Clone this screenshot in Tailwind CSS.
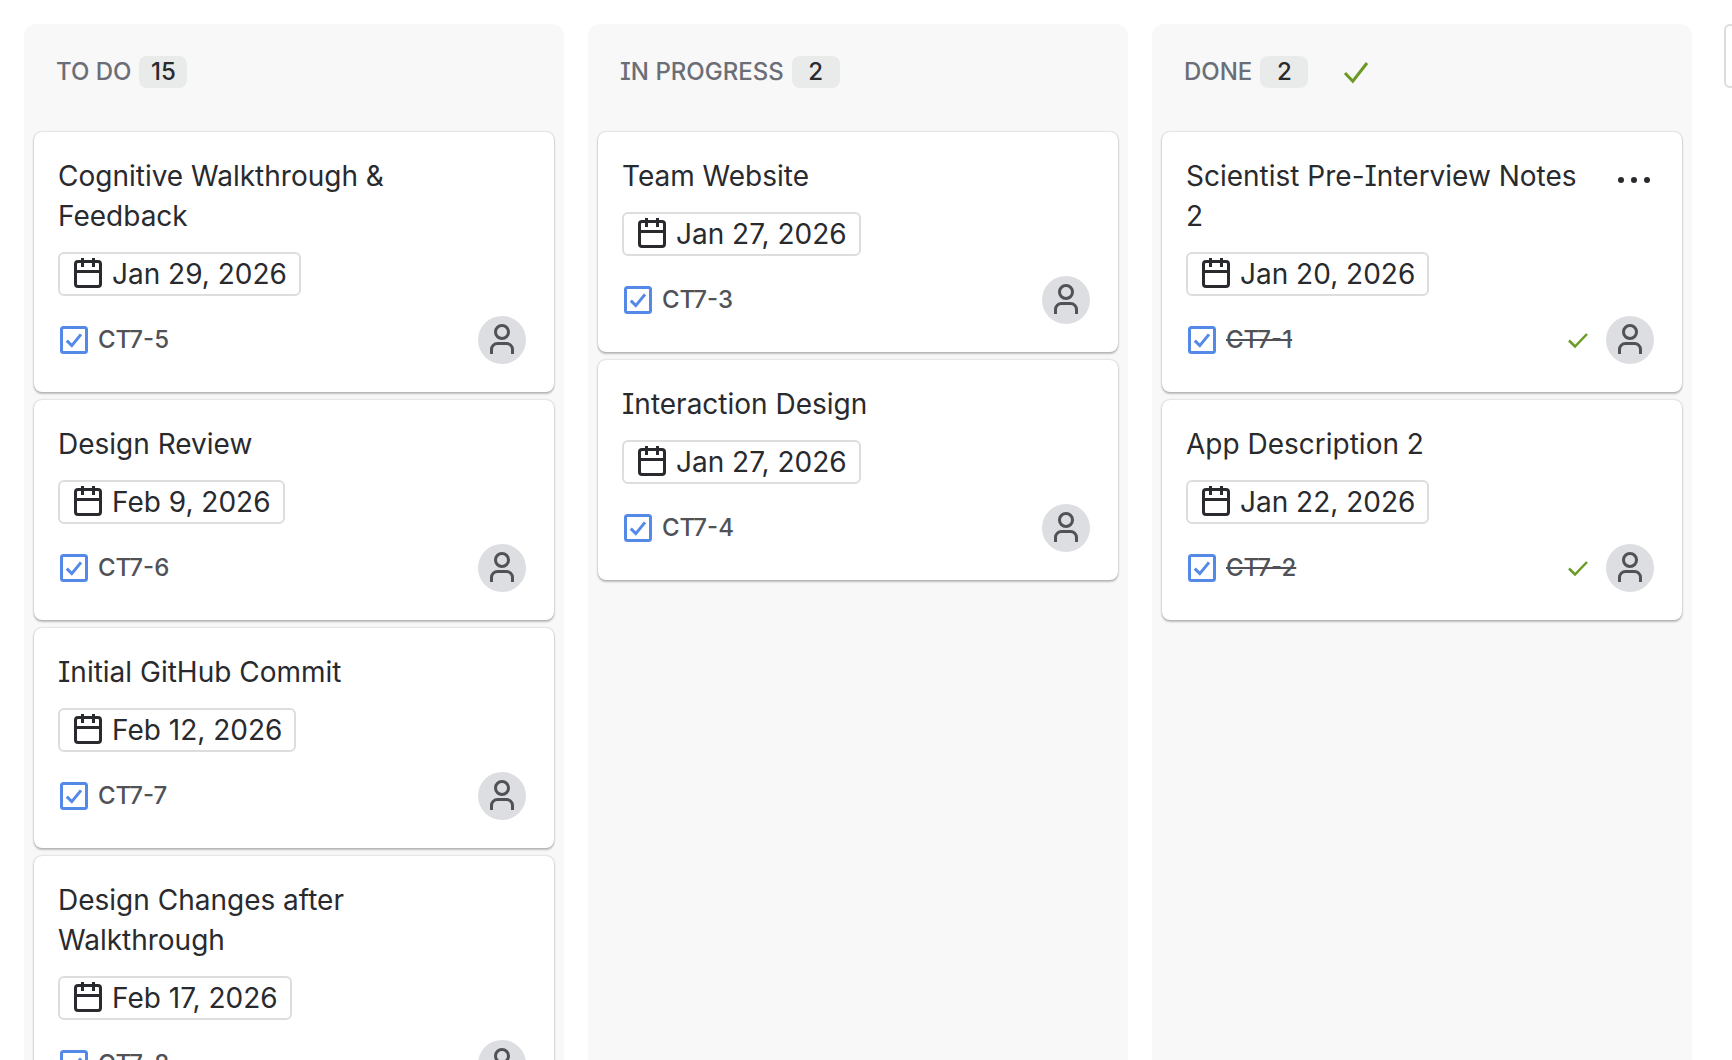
<!DOCTYPE html>
<html lang="en">
<head>
<meta charset="utf-8">
<meta name="viewport" content="width=device-width, initial-scale=1">
<title>Board</title>
<script src="https://cdn.jsdelivr.net/npm/@tailwindcss/browser@4"></script>
</head>
<body class="bg-white font-['Inter',sans-serif] text-[#292a2e] [font-feature-settings:'cv08']">
<svg class="hidden" aria-hidden="true">
  <symbol id="calendar" viewBox="0 0 16 16" fill="none" stroke="currentColor" stroke-width="1.5">
    <rect x="1.75" y="1.75" width="12.5" height="12.5" rx="1.25"/>
    <path d="M1.75 6.75h12.5M5.25 0v4.5M10.75 0v4.5"/>
  </symbol>
  <symbol id="task" viewBox="0 0 16 16" fill="none" stroke="currentColor" stroke-width="1.5">
    <rect x="1.75" y="1.75" width="12.5" height="12.5" rx="1"/>
    <path d="M4.4 8.3l2.5 2.5 4.6-5.6"/>
  </symbol>
  <symbol id="person" viewBox="0 0 48 48" fill="none" stroke="currentColor" stroke-width="3">
    <circle cx="24" cy="16" r="6.5"/>
    <path d="M13.500 38v-4.500a6 6 0 0 1 6-6h9a6 6 0 0 1 6 6v4.500"/>
  </symbol>
  <symbol id="check" viewBox="0 0 16 16" fill="none" stroke="currentColor" stroke-width="1.5">
    <path d="M2.500 8.500l3.900 4.100L13.500 3.500"/>
  </symbol>
  <symbol id="check-small" viewBox="0 0 24 24" fill="none" stroke="currentColor" stroke-width="2.500">
    <path d="M3 12.500l6 6L21 6"/>
  </symbol>
  <symbol id="more" viewBox="0 0 48 48" fill="currentColor">
    <circle cx="11" cy="24" r="3"/><circle cx="24" cy="24" r="3"/><circle cx="37" cy="24" r="3"/>
  </symbol>
</svg>

<main class="flex h-screen gap-8 overflow-hidden pt-6 pl-6">
  <div class="flex shrink-0 gap-6">

    <section class="w-[540px] shrink-0 rounded-t-xl bg-[#f8f8f8] px-2.5" aria-labelledby="col-todo">
      <header class="flex h-[108px] items-start gap-2 px-[22px] pt-8">
        <h2 id="col-todo" class="text-2xl font-medium text-[#6b6e76]">TO DO</h2>
        <span class="w-12 rounded-lg bg-[#e9ebea] text-center text-2xl font-medium">15</span>
      </header>
      <ul class="flex flex-col gap-2">
        <li class="rounded-lg bg-white pt-6 pr-7 pb-7 pl-6 shadow-[0_2px_2px_#1e1f2140,0_0_2px_#1e1f214f]">
          <h3 class="pr-16 text-[28px] leading-10">Cognitive Walkthrough &amp; Feedback</h3>
          <div class="mt-4 flex h-11 w-fit items-center gap-2 rounded-md border-2 border-[#dddddd] px-3 text-[28px]"><svg class="size-8"><use href="#calendar"/></svg><time datetime="2026-01-29">Jan 29, 2026</time></div>
          <div class="mt-5 flex h-12 items-center gap-2">
            <svg class="size-8 text-[#5489e8]" role="img" aria-label="Task"><use href="#task"/></svg>
            <a href="#CT7-5" class="text-2xl font-medium text-[#505258]">CT7-5</a>
            <button class="ml-auto size-12 rounded-full bg-[#dddee1] text-[#505258]" aria-label="Assign"><svg class="size-12"><use href="#person"/></svg></button>
          </div>
        </li>
        <li class="rounded-lg bg-white pt-6 pr-7 pb-7 pl-6 shadow-[0_2px_2px_#1e1f2140,0_0_2px_#1e1f214f]">
          <h3 class="pr-16 text-[28px] leading-10">Design Review</h3>
          <div class="mt-4 flex h-11 w-fit items-center gap-2 rounded-md border-2 border-[#dddddd] px-3 text-[28px]"><svg class="size-8"><use href="#calendar"/></svg><time datetime="2026-02-09">Feb 9, 2026</time></div>
          <div class="mt-5 flex h-12 items-center gap-2">
            <svg class="size-8 text-[#5489e8]" role="img" aria-label="Task"><use href="#task"/></svg>
            <a href="#CT7-6" class="text-2xl font-medium text-[#505258]">CT7-6</a>
            <button class="ml-auto size-12 rounded-full bg-[#dddee1] text-[#505258]" aria-label="Assign"><svg class="size-12"><use href="#person"/></svg></button>
          </div>
        </li>
        <li class="rounded-lg bg-white pt-6 pr-7 pb-7 pl-6 shadow-[0_2px_2px_#1e1f2140,0_0_2px_#1e1f214f]">
          <h3 class="pr-16 text-[28px] leading-10">Initial GitHub Commit</h3>
          <div class="mt-4 flex h-11 w-fit items-center gap-2 rounded-md border-2 border-[#dddddd] px-3 text-[28px]"><svg class="size-8"><use href="#calendar"/></svg><time datetime="2026-02-12">Feb 12, 2026</time></div>
          <div class="mt-5 flex h-12 items-center gap-2">
            <svg class="size-8 text-[#5489e8]" role="img" aria-label="Task"><use href="#task"/></svg>
            <a href="#CT7-7" class="text-2xl font-medium text-[#505258]">CT7-7</a>
            <button class="ml-auto size-12 rounded-full bg-[#dddee1] text-[#505258]" aria-label="Assign"><svg class="size-12"><use href="#person"/></svg></button>
          </div>
        </li>
        <li class="rounded-lg bg-white pt-6 pr-7 pb-7 pl-6 shadow-[0_2px_2px_#1e1f2140,0_0_2px_#1e1f214f]">
          <h3 class="pr-16 text-[28px] leading-10">Design Changes after Walkthrough</h3>
          <div class="mt-4 flex h-11 w-fit items-center gap-2 rounded-md border-2 border-[#dddddd] px-3 text-[28px]"><svg class="size-8"><use href="#calendar"/></svg><time datetime="2026-02-17">Feb 17, 2026</time></div>
          <div class="mt-5 flex h-12 items-center gap-2">
            <svg class="size-8 text-[#5489e8]" role="img" aria-label="Task"><use href="#task"/></svg>
            <a href="#CT7-8" class="text-2xl font-medium text-[#505258]">CT7-8</a>
            <button class="ml-auto size-12 rounded-full bg-[#dddee1] text-[#505258]" aria-label="Assign"><svg class="size-12"><use href="#person"/></svg></button>
          </div>
        </li>
      </ul>
    </section>

    <section class="w-[540px] shrink-0 rounded-t-xl bg-[#f8f8f8] px-2.5" aria-labelledby="col-progress">
      <header class="flex h-[108px] items-start gap-2 px-[22px] pt-8">
        <h2 id="col-progress" class="text-2xl font-medium text-[#6b6e76]">IN PROGRESS</h2>
        <span class="w-12 rounded-lg bg-[#e9ebea] text-center text-2xl font-medium">2</span>
      </header>
      <ul class="flex flex-col gap-2">
        <li class="rounded-lg bg-white pt-6 pr-7 pb-7 pl-6 shadow-[0_2px_2px_#1e1f2140,0_0_2px_#1e1f214f]">
          <h3 class="pr-16 text-[28px] leading-10">Team Website</h3>
          <div class="mt-4 flex h-11 w-fit items-center gap-2 rounded-md border-2 border-[#dddddd] px-3 text-[28px]"><svg class="size-8"><use href="#calendar"/></svg><time datetime="2026-01-27">Jan 27, 2026</time></div>
          <div class="mt-5 flex h-12 items-center gap-2">
            <svg class="size-8 text-[#5489e8]" role="img" aria-label="Task"><use href="#task"/></svg>
            <a href="#CT7-3" class="text-2xl font-medium text-[#505258]">CT7-3</a>
            <button class="ml-auto size-12 rounded-full bg-[#dddee1] text-[#505258]" aria-label="Assign"><svg class="size-12"><use href="#person"/></svg></button>
          </div>
        </li>
        <li class="rounded-lg bg-white pt-6 pr-7 pb-7 pl-6 shadow-[0_2px_2px_#1e1f2140,0_0_2px_#1e1f214f]">
          <h3 class="pr-16 text-[28px] leading-10">Interaction Design</h3>
          <div class="mt-4 flex h-11 w-fit items-center gap-2 rounded-md border-2 border-[#dddddd] px-3 text-[28px]"><svg class="size-8"><use href="#calendar"/></svg><time datetime="2026-01-27">Jan 27, 2026</time></div>
          <div class="mt-5 flex h-12 items-center gap-2">
            <svg class="size-8 text-[#5489e8]" role="img" aria-label="Task"><use href="#task"/></svg>
            <a href="#CT7-4" class="text-2xl font-medium text-[#505258]">CT7-4</a>
            <button class="ml-auto size-12 rounded-full bg-[#dddee1] text-[#505258]" aria-label="Assign"><svg class="size-12"><use href="#person"/></svg></button>
          </div>
        </li>
      </ul>
    </section>

    <section class="w-[540px] shrink-0 rounded-t-xl bg-[#f8f8f8] px-2.5" aria-labelledby="col-done">
      <header class="flex h-[108px] items-start gap-2 px-[22px] pt-8">
        <h2 id="col-done" class="text-2xl font-medium text-[#6b6e76]">DONE</h2>
        <span class="w-12 rounded-lg bg-[#e9ebea] text-center text-2xl font-medium">2</span>
        <svg class="ml-6 size-8 text-[#6a9a23]" role="img" aria-label="Done"><use href="#check"/></svg>
      </header>
      <ul class="flex flex-col gap-2">
        <li class="rounded-lg bg-white pt-6 pr-7 pb-7 pl-6 shadow-[0_2px_2px_#1e1f2140,0_0_2px_#1e1f214f]">
          <div class="-mr-1 flex items-start gap-4">
            <h3 class="flex-1 text-[28px] leading-10">Scientist Pre-Interview Notes 2</h3>
            <button class="size-12 shrink-0" aria-label="More actions"><svg class="size-12"><use href="#more"/></svg></button>
          </div>
          <div class="mt-4 flex h-11 w-fit items-center gap-2 rounded-md border-2 border-[#dddddd] px-3 text-[28px]"><svg class="size-8"><use href="#calendar"/></svg><time datetime="2026-01-20">Jan 20, 2026</time></div>
          <div class="mt-5 flex h-12 items-center gap-2">
            <svg class="size-8 text-[#5489e8]" role="img" aria-label="Task"><use href="#task"/></svg>
            <a href="#CT7-1" class="text-2xl font-medium text-[#505258] line-through">CT7-1</a>
            <svg class="mr-2 ml-auto size-6 text-[#6a9a23]" role="img" aria-label="Done"><use href="#check-small"/></svg>
            <button class="size-12 rounded-full bg-[#dddee1] text-[#505258]" aria-label="Assign"><svg class="size-12"><use href="#person"/></svg></button>
          </div>
        </li>
        <li class="rounded-lg bg-white pt-6 pr-7 pb-7 pl-6 shadow-[0_2px_2px_#1e1f2140,0_0_2px_#1e1f214f]">
          <h3 class="pr-16 text-[28px] leading-10">App Description 2</h3>
          <div class="mt-4 flex h-11 w-fit items-center gap-2 rounded-md border-2 border-[#dddddd] px-3 text-[28px]"><svg class="size-8"><use href="#calendar"/></svg><time datetime="2026-01-22">Jan 22, 2026</time></div>
          <div class="mt-5 flex h-12 items-center gap-2">
            <svg class="size-8 text-[#5489e8]" role="img" aria-label="Task"><use href="#task"/></svg>
            <a href="#CT7-2" class="text-2xl font-medium text-[#505258] line-through">CT7-2</a>
            <svg class="mr-2 ml-auto size-6 text-[#6a9a23]" role="img" aria-label="Done"><use href="#check-small"/></svg>
            <button class="size-12 rounded-full bg-[#dddee1] text-[#505258]" aria-label="Assign"><svg class="size-12"><use href="#person"/></svg></button>
          </div>
        </li>
      </ul>
    </section>
  </div>

  <button class="size-16 shrink-0 rounded-md border-2 border-[#dddddd] text-[28px]" aria-label="Create column"></button>
</main>
</body>
</html>
